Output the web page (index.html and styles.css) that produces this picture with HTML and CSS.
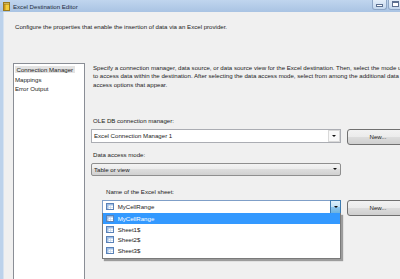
FILE: index.html
```html
<!DOCTYPE html>
<html>

<head>
    <meta charset="utf-8">
    <title>Excel Destination Editor</title>
    <link rel="stylesheet" href="styles.css">
</head>

<body>
    <div class="window">
        <div class="titlebar">
            <svg class="app-icon" width="7" height="9" viewBox="0 0 7 9">
                <rect x="0.5" y="1.5" width="6" height="7" fill="#f3cf3c" stroke="#9a7a1c" stroke-width="1" />
                <rect x="1" y="2" width="1.5" height="6" fill="#c9941e" />
                <rect x="0.5" y="0.5" width="6" height="1.5" fill="#fbe89a" stroke="#9a7a1c" stroke-width="1" />
            </svg>
            <span class="title">Excel Destination Editor</span>
            <div class="caption-buttons">
                <span class="cap-btn min"><span class="min-glyph"></span></span>
                <span class="cap-btn max"><span class="max-glyph"></span></span>
                <span class="cap-btn close"></span>
            </div>
        </div>

        <div class="frame">
            <p class="intro">Configure the properties that enable the insertion of data via an Excel provider.</p>

            <div class="main">
                <ul class="nav">
                    <li><span class="selected">Connection Manager</span></li>
                    <li>Mappings</li>
                    <li>Error Output</li>
                </ul>

                <div class="content">
                    <p class="help">Specify a connection manager, data source, or data source view for the Excel destination. Then, select the mode used<br>to access data within the destination. After selecting the data access mode, select from among the additional data<br>access options that appear.</p>

                    <span class="label first">OLE DB connection manager:</span>
                    <div class="row">
                        <div class="combo edit">
                            <span class="combo-text">Excel Connection Manager 1</span>
                            <span class="arrow-box"><span class="arrow"></span></span>
                        </div>
                        <button class="btn">New...</button>
                    </div>

                    <span class="label">Data access mode:</span>
                    <div class="row">
                        <div class="combo list-style">
                            <span class="combo-text">Table or view</span>
                            <span class="arrow plain"></span>
                        </div>
                    </div>

                    <div class="sheet">
                        <span class="label sheet-label">Name of the Excel sheet:</span>
                        <div class="row">
                            <div class="combo open">
                                <svg class="tbl" width="8" height="7" viewBox="0 0 8 7">
                                    <rect x="0.5" y="0.5" width="7" height="6" fill="#fff" stroke="#5a82b8" />
                                    <rect x="1" y="1" width="6" height="1.5" fill="#9cbce4" />
                                    <rect x="1" y="1" width="1.5" height="5" fill="#9cbce4" />
                                    <path d="M1 4.5H7M4.5 2.5V6" stroke="#c4d5ea" stroke-width="0.7" />
                                </svg>
                                <span class="combo-text">MyCellRange</span>
                                <span class="drop-btn"><span class="arrow"></span></span>

                                <ul class="dropdown">
                                    <li class="active">
                                        <svg class="tbl" width="8" height="7" viewBox="0 0 8 7">
                                            <rect x="0.5" y="0.5" width="7" height="6" fill="#fff" stroke="#5a82b8" />
                                            <rect x="1" y="1" width="6" height="1.5" fill="#9cbce4" />
                                            <rect x="1" y="1" width="1.5" height="5" fill="#9cbce4" />
                                            <path d="M1 4.5H7M4.5 2.5V6" stroke="#c4d5ea" stroke-width="0.7" />
                                        </svg>
                                        MyCellRange
                                    </li>
                                    <li>
                                        <svg class="tbl" width="8" height="7" viewBox="0 0 8 7">
                                            <rect x="0.5" y="0.5" width="7" height="6" fill="#fff" stroke="#5a82b8" />
                                            <rect x="1" y="1" width="6" height="1.5" fill="#9cbce4" />
                                            <rect x="1" y="1" width="1.5" height="5" fill="#9cbce4" />
                                            <path d="M1 4.5H7M4.5 2.5V6" stroke="#c4d5ea" stroke-width="0.7" />
                                        </svg>
                                        Sheet1$
                                    </li>
                                    <li>
                                        <svg class="tbl" width="8" height="7" viewBox="0 0 8 7">
                                            <rect x="0.5" y="0.5" width="7" height="6" fill="#fff" stroke="#5a82b8" />
                                            <rect x="1" y="1" width="6" height="1.5" fill="#9cbce4" />
                                            <rect x="1" y="1" width="1.5" height="5" fill="#9cbce4" />
                                            <path d="M1 4.5H7M4.5 2.5V6" stroke="#c4d5ea" stroke-width="0.7" />
                                        </svg>
                                        Sheet2$
                                    </li>
                                    <li>
                                        <svg class="tbl" width="8" height="7" viewBox="0 0 8 7">
                                            <rect x="0.5" y="0.5" width="7" height="6" fill="#fff" stroke="#5a82b8" />
                                            <rect x="1" y="1" width="6" height="1.5" fill="#9cbce4" />
                                            <rect x="1" y="1" width="1.5" height="5" fill="#9cbce4" />
                                            <path d="M1 4.5H7M4.5 2.5V6" stroke="#c4d5ea" stroke-width="0.7" />
                                        </svg>
                                        Sheet3$
                                    </li>
                                </ul>
                            </div>
                            <button class="btn">New...</button>
                        </div>
                    </div>
                </div>
            </div>
        </div>
    </div>
</body>

</html>
```

FILE: styles.css
```css
html,
body {
    margin: 0;
    overflow: hidden;
}

body {
    background-color: #f0f0f0;
    font-family: "Liberation Sans", Arial, sans-serif;
    font-size: 6.1px;
    color: #1b1b1b;
}

.window {
    width: 430px;
    height: 279px;
}

/* title bar */
.titlebar {
    height: 12px;
    display: flex;
    align-items: center;
    background: linear-gradient(#c0d5ee, #a9c3e3);
}

.app-icon {
    margin-left: 3px;
    display: block;
}

.title {
    margin-left: 3px;
    color: #1e2c3e;
}

.caption-buttons {
    margin-left: auto;
    align-self: flex-start;
    display: flex;
    gap: 1px;
}

.cap-btn {
    height: 10px;
    width: 15px;
    box-sizing: border-box;
    border: 1px solid #8ea6c6;
    border-top: none;
    border-radius: 0 0 3px 3px;
    background: linear-gradient(#e4eef9, #c4d7ee);
    display: flex;
    align-items: flex-end;
    justify-content: center;
}

.cap-btn.close {
    width: 26px;
    background: linear-gradient(#e9a99a, #c9564a);
}

.min-glyph {
    width: 5px;
    height: 1px;
    margin-bottom: 2px;
    background: #fff;
    border: 1px solid #5d7091;
}

.max-glyph {
    width: 5px;
    height: 3px;
    margin-bottom: 2px;
    border: 1px solid #5d7091;
    border-top-width: 2px;
    background: #fff;
}

/* dialog body */
.frame {
    height: 267px;
    box-sizing: border-box;
    border-left: 3px solid #bcd2eb;
    box-shadow: inset 1px 0 0 #d6e2f0;
    background-color: #f0f0f0;
}

.intro {
    margin: 0;
    padding: 9.5px 0 0 12px;
    line-height: 9px;
    white-space: nowrap;
}

.main {
    display: flex;
    align-items: flex-start;
    margin-top: 32.5px;
}

.nav {
    list-style: none;
    margin: 0 0 0 10px;
    padding: 1.4px 0 0 1px;
    width: 72px;
    height: 230px;
    box-sizing: border-box;
    background-color: #ffffff;
    border: 1px solid #8a8e96;
}

.nav li {
    line-height: 9.3px;
    white-space: nowrap;
}

.nav .selected {
    display: inline-block;
    line-height: 7px;
    padding: 0 1.5px;
    background-color: #e3e3e3;
}

.content {
    margin-left: 6px;
    width: 318px;
}

.help {
    margin: 0.5px 0 0;
    padding-left: 2px;
    line-height: 8.7px;
    white-space: nowrap;
}

.label {
    display: block;
    padding-left: 2px;
    line-height: 9px;
    margin: 5.5px 0 3.6px;
}

.label.first {
    margin-top: 26.6px;
}

.row {
    display: flex;
    align-items: flex-start;
    gap: 6px;
}

.combo {
    position: relative;
    flex: 1;
    height: 14px;
    box-sizing: border-box;
    display: flex;
    align-items: center;
    padding-left: 2px;
    background-color: #ffffff;
    border: 1px solid #abadb3;
}

.combo-text {
    flex: 1;
    white-space: nowrap;
}

.arrow {
    width: 0;
    height: 0;
    border-left: 2px solid transparent;
    border-right: 2px solid transparent;
    border-top: 2px solid #111;
}

.arrow-box {
    width: 12px;
    height: 12px;
    box-sizing: border-box;
    border: 1px solid #d9d9d9;
    background-color: #f8f8f8;
    display: flex;
    align-items: center;
    justify-content: center;
}

.combo.list-style {
    flex: none;
    width: 250px;
    height: 13px;
    border: 1px solid #8f8f8f;
    border-radius: 2px;
    background: linear-gradient(#f3f3f3 0%, #ebebeb 50%, #dddddd 50%, #d1d1d1 100%);
}

.arrow.plain {
    margin-right: 3px;
}

.sheet {
    padding-left: 10.7px;
}

.sheet-label {
    margin-top: 11.2px;
    margin-left: 2.3px;
}

.combo.open {
    border-color: #7f9fc8;
    padding-left: 3px;
}

.tbl {
    display: block;
    flex: none;
    margin-right: 4px;
}

.drop-btn {
    align-self: stretch;
    width: 9px;
    margin: -1px -1px -1px 0;
    border: 1px solid #3d7bb0;
    background: linear-gradient(#dcf0fc 0%, #c1e3f7 50%, #8ec8ee 50%, #6cb2e0 100%);
    display: flex;
    align-items: center;
    justify-content: center;
}

.dropdown {
    position: absolute;
    top: 12.6px;
    left: -1px;
    right: -1px;
    margin: 0;
    padding: 0 0 1.6px;
    list-style: none;
    background-color: #ffffff;
    border: 1px solid #7a7a7a;
    border-top: none;
    box-shadow: 2px 2px 1px rgba(0, 0, 0, 0.35);
}

.dropdown li {
    height: 10.7px;
    display: flex;
    align-items: center;
    padding-left: 3px;
    white-space: nowrap;
}

.dropdown li.active {
    background-color: #3399ff;
    color: #ffffff;
}

.btn {
    flex: none;
    width: 62px;
    height: 16px;
    padding: 0;
    font-family: inherit;
    font-size: inherit;
    color: #1b1b1b;
    border: 1px solid #707070;
    border-radius: 3px;
    background: linear-gradient(#f2f2f2 0%, #ebebeb 50%, #dddddd 50%, #cfcfcf 100%);
}
```
